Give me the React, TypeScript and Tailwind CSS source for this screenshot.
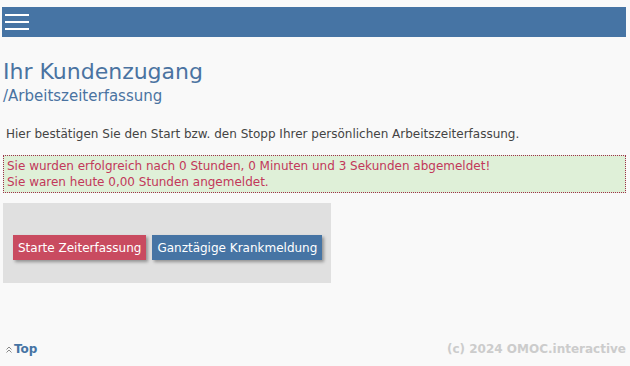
export default function App() {
  const f = { fontFamily: '"DejaVu Sans", Verdana, sans-serif' };
  return (
    <div className="min-h-[366px] bg-[#f9f9f9] pt-[7px] px-[2px] text-[#444]" style={f}>
      <div className="h-[30px] bg-[#4674a4] w-[624px] flex items-center pl-[3px]">
        <div className="flex flex-col gap-[5px] w-[24px]">
          <div className="h-[2px] bg-white" />
          <div className="h-[2px] bg-white" />
          <div className="h-[2px] bg-white" />
        </div>
      </div>
      <div className="pl-[1px]">
        <h1 className="mt-[21px] text-[22px] leading-[28px] text-[#4a73a1]">Ihr Kundenzugang</h1>
        <h2 className="text-[15px] leading-[20px] text-[#4a73a1]">/Arbeitszeiterfassung</h2>
        <p className="mt-[20px] text-[12px] leading-[16px] text-[#444] pl-[3px]">Hier bestätigen Sie den Start bzw. den Stopp Ihrer persönlichen Arbeitszeiterfassung.</p>
      </div>
      <div className="mt-[13px] ml-[1px] w-[623px] border border-dotted border-[#a0304a] bg-[#dff0d8] text-[#c2385a] text-[12px] leading-[16px] px-[3px] py-[2px]">
        <div>Sie wurden erfolgreich nach 0 Stunden, 0 Minuten und 3 Sekunden abgemeldet!</div>
        <div>Sie waren heute 0,00 Stunden angemeldet.</div>
      </div>
      <div className="mt-[10px] ml-[1px] w-[328px] h-[80px] bg-[#e0e0e0] flex items-start gap-[6px] pl-[10px] pt-[32px]">
        <button className="h-[25px] px-[5px] bg-[#c94b60] text-white text-[12px] shadow-[2px_2px_3px_rgba(0,0,0,0.35)]">Starte Zeiterfassung</button>
        <button className="h-[25px] px-[5px] bg-[#4674a4] text-white text-[12px] shadow-[2px_2px_3px_rgba(0,0,0,0.35)]">Ganztägige Krankmeldung</button>
      </div>
      <div className="mt-[57px] flex justify-between items-center w-[624px] pl-[4px]">
        <div className="flex items-center gap-[2px] text-[#4674a4] font-bold text-[12px]">
          <svg width="6" height="7" viewBox="0 0 6 7" fill="none" stroke="#888" strokeWidth="1">
            <path d="M0.5 3.5 L3 1 L5.5 3.5 M0.5 6.5 L3 4 L5.5 6.5" />
          </svg>
          <span>Top</span>
        </div>
        <div className="text-[#ccc] font-bold text-[12px]">(c) 2024 OMOC.interactive</div>
      </div>
    </div>
  );
}
